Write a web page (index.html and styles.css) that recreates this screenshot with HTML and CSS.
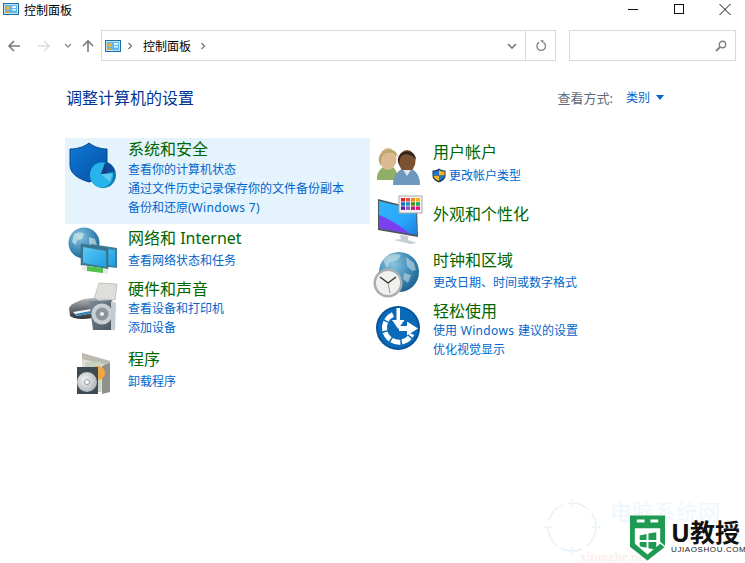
FILE: index.html
```html
<!DOCTYPE html>
<html lang="zh-CN">
<head>
<meta charset="utf-8">
<title>控制面板</title>
<link rel="stylesheet" href="styles.css">
</head>
<body>
<svg class="defs" width="0" height="0">
  <defs>
    <symbol id="cp" viewBox="0 0 16 12">
      <rect x=".5" y=".5" width="15" height="11" fill="#bfe3f7" stroke="#1d6fa5"/>
      <rect x="2" y="2" width="12" height="8" fill="#5db7e8"/>
      <circle cx="5" cy="5" r="2" fill="#f5b335"/>
      <rect x="9" y="3" width="4" height="2" fill="#e6f4fc"/>
      <rect x="9" y="6" width="4" height="1.5" fill="#e6f4fc"/>
      <rect x="2" y="8.4" width="5" height="1.6" fill="#f0a020"/>
    </symbol>
    <radialGradient id="globe" cx=".35" cy=".3" r=".8">
      <stop offset="0" stop-color="#8cc6e0"/><stop offset=".55" stop-color="#3f8cb8"/><stop offset="1" stop-color="#1b5a86"/>
    </radialGradient>
    <linearGradient id="shieldG" x1="0" y1="0" x2="1" y2="1">
      <stop offset="0" stop-color="#0f79d8"/><stop offset="1" stop-color="#0650a0"/>
    </linearGradient>
    <linearGradient id="screenG" x1="0" y1="0" x2="1" y2="1">
      <stop offset="0" stop-color="#5cc8f5"/><stop offset="1" stop-color="#1d9fe0"/>
    </linearGradient>
    <linearGradient id="desk" x1="0" y1="0" x2="1" y2="1">
      <stop offset="0" stop-color="#2fb4fb"/><stop offset=".6" stop-color="#2aa5fa"/><stop offset="1" stop-color="#1a80e0"/>
    </linearGradient>
    <linearGradient id="metal" x1="0" y1="0" x2="1" y2="1">
      <stop offset="0" stop-color="#7d8c9a"/><stop offset="1" stop-color="#46535f"/>
    </linearGradient>
    <linearGradient id="printerG" x1="0" y1="0" x2="0" y2="1">
      <stop offset="0" stop-color="#b4b9bc"/><stop offset=".5" stop-color="#6a7074"/><stop offset="1" stop-color="#2e3236"/>
    </linearGradient>
    <radialGradient id="cd" cx=".4" cy=".4" r=".7">
      <stop offset="0" stop-color="#f2f2f2"/><stop offset="1" stop-color="#a9b0b4"/>
    </radialGradient>
  </defs>
</svg>

<div class="window">
  <header class="titlebar">
    <svg class="title-icon"><use href="#cp"/></svg>
    <span class="title-text">控制面板</span>
    <div class="win-buttons">
      <svg class="win-btn" viewBox="0 0 12 12"><path d="M1 6.5h10" stroke="#111" fill="none"/></svg>
      <svg class="win-btn" viewBox="0 0 12 12"><rect x="1.5" y="1.5" width="9" height="9" stroke="#111" fill="none"/></svg>
      <svg class="win-btn" viewBox="0 0 12 12"><path d="M.5 1l11 11M11.5 1l-11 11" stroke="#111" fill="none"/></svg>
    </div>
  </header>

  <nav class="toolbar">
    <div class="nav-buttons">
      <svg class="nav-ic" viewBox="0 0 14 14"><path d="M13 7H2M7 2 2 7l5 5" stroke="#7a7a7a" stroke-width="1.6" fill="none"/></svg>
      <svg class="nav-ic nav-gap" viewBox="0 0 14 14"><path d="M1 7h11M7 2l5 5-5 5" stroke="#dcdcdc" stroke-width="1.6" fill="none"/></svg>
      <svg class="nav-mini" viewBox="0 0 8 6"><path d="m1 1 3 3 3-3" stroke="#8a8a8a" stroke-width="1.3" fill="none"/></svg>
      <svg class="nav-ic nav-up" viewBox="0 0 14 14"><path d="M7 13V2M2 7l5-5 5 5" stroke="#7a7a7a" stroke-width="1.6" fill="none"/></svg>
    </div>
    <div class="address">
      <svg class="addr-icon"><use href="#cp"/></svg>
      <svg class="crumb" viewBox="0 0 6 8"><path d="m1.500 1 3 3-3 3" stroke="#777" stroke-width="1.300" fill="none"/></svg>
      <span class="addr-text">控制面板</span>
      <svg class="crumb" viewBox="0 0 6 8"><path d="m1.500 1 3 3-3 3" stroke="#777" stroke-width="1.300" fill="none"/></svg>
      <svg class="addr-drop" viewBox="0 0 10 6"><path d="m1 1 4 4 4-4" stroke="#777" stroke-width="1.600" fill="none"/></svg>
      <div class="addr-refresh">
        <svg class="refresh-ic" viewBox="0 0 12 12"><path d="M8.800 2.700A4.300 4.300 0 1 1 4.200 2.300" stroke="#808080" stroke-width="1.300" fill="none"/><path d="M5 .2 8.500 .2 8.500 3.500Z" fill="#808080"/></svg>
      </div>
    </div>
    <div class="search">
      <svg class="search-ic" viewBox="0 0 12 12"><circle cx="7.500" cy="4.500" r="3.200" stroke="#808080" stroke-width="1.400" fill="none"/><path d="M5 7 1 11" stroke="#808080" stroke-width="1.800"/></svg>
    </div>
  </nav>

  <main class="content">
    <div class="content-head">
      <h1 class="heading">调整计算机的设置</h1>
      <div class="view-by">
        <span class="view-label">查看方式:</span>
        <span class="view-value">类别</span>
        <span class="view-caret"></span>
      </div>
    </div>

    <div class="columns">
      <div class="col col-left">
        <section class="cat cat-active">
          <svg class="cat-icon" viewBox="0 0 63 50">
            <path d="M5 11C12 11 19 9 24 5 29 9 36 11 42 11V27C42 36 33 41 24 44 14 41 5 36 5 27Z" fill="url(#shieldG)" stroke="#04488f"/>
            <ellipse cx="38" cy="37" rx="13" ry="13" fill="#0f7fb5"/>
            <ellipse cx="36.500" cy="37" rx="11.500" ry="12.500" fill="#26b4ea"/>
            <path d="M41 24 36 36 50 34C49 29 46 25 41 24Z" fill="#0b4f9a"/>
            <path d="M36 36 40 25 43 35Z" fill="#1a3f88"/>
            <path d="M36 36 47 36 45 44Z" fill="#5fc8ef"/>
          </svg>
          <div class="cat-body">
            <h2 class="cat-title">系统和安全</h2>
            <a class="cat-link">查看你的计算机状态</a>
            <a class="cat-link">通过文件历史记录保存你的文件备份副本</a>
            <a class="cat-link">备份和还原(<span class="latin">Windows 7</span>)</a>
          </div>
        </section>

        <section class="cat">
          <svg class="cat-icon" viewBox="0 0 63 50">
            <circle cx="19" cy="16" r="15.500" fill="url(#globe)"/>
            <path d="M9 7c4-2 8-2 10 0l-2 5-5 1-1 5-4-3zM24 10l6 2 2 6-5 3-3-5z" fill="#dff0e6" opacity=".6"/>
            <path d="M26 17 52 21V41L26 38Z" fill="#3d7d9e"/>
            <path d="M28 20 50 23V39L28 36Z" fill="url(#screenG)"/>
            <path d="M16 17 43 22V42L16 38Z" fill="#39788f" stroke="#2c6480" stroke-width=".5"/>
            <path d="M18 20 41 24V40L18 36Z" fill="url(#screenG)"/>
            <path d="M17 38 43 42 43 47 17 43Z" fill="#e6eae8"/>
            <path d="M22 39 38 41 38 46 22 44Z" fill="#52c24a"/>
          </svg>
          <div class="cat-body">
            <h2 class="cat-title">网络和 Internet</h2>
            <a class="cat-link cat-link-single">查看网络状态和任务</a>
          </div>
        </section>

        <section class="cat">
          <svg class="cat-icon" viewBox="0 0 63 50">
            <path d="M34 5 52 6 50 22 29 21Z" fill="#dededa" stroke="#a8a8a4" stroke-width=".6"/>
            <path d="M4 30C6 25 18 20 30 20L36 24V38C22 42 10 42 5 38Z" fill="url(#printerG)"/>
            <path d="M8 34 26 31 28 35 12 38Z" fill="#f4f4f4"/>
            <path d="M10 36 26 33 27 35 13 38Z" fill="#2f7fb8"/>
            <path d="M24 23 47 22 50 52 28 52Z" fill="url(#metal)"/>
            <circle cx="37" cy="36" r="10.500" fill="#c9cfd2"/>
            <circle cx="37" cy="36" r="6.500" fill="#8c979d"/>
            <circle cx="37" cy="36" r="2" fill="#eef0f1"/>
            <path d="M46 23 51 25 50 52 46 52Z" fill="#c4cbd0"/>
          </svg>
          <div class="cat-body">
            <h2 class="cat-title">硬件和声音</h2>
            <a class="cat-link">查看设备和打印机</a>
            <a class="cat-link">添加设备</a>
          </div>
        </section>

        <section class="cat">
          <svg class="cat-icon" viewBox="0 0 63 50">
            <path d="M17 5 45 13V44L17 44Z" fill="#e2e0da"/>
            <path d="M17 5 45 13 45 18 17 11Z" fill="#bdbab2"/>
            <path d="M37 18 45 15V44L37 46Z" fill="#8f8f8b"/>
            <rect x="20" y="14" width="16" height="30" fill="#c6d5c0"/>
            <circle cx="33" cy="25" r="7" fill="#f0a643"/>
            <rect x="12" y="19" width="21" height="27" fill="#3d4a52"/>
            <circle cx="22" cy="34" r="10" fill="url(#cd)"/>
            <circle cx="22" cy="34" r="2.500" fill="#fff" stroke="#8f979b"/>
          </svg>
          <div class="cat-body">
            <h2 class="cat-title">程序</h2>
            <a class="cat-link cat-link-single">卸载程序</a>
          </div>
        </section>
      </div>

      <div class="col col-right">
        <section class="cat">
          <svg class="cat-icon" viewBox="0 0 63 50">
            <path d="M7 39C6 31 12 25 18 25 24 25 28 30 28 39Z" fill="#8fae66"/>
            <ellipse cx="18" cy="18" rx="8.500" ry="11" fill="#dcb893"/>
            <path d="M9 21C6 8 26 3 28 16 25 12 20 11 17 12 13 12 11 16 11 25Z" fill="#bda86e"/>
            <path d="M23 44C23 33 30 27 37 27 44 27 50 33 50 44Z" fill="#6d97bd"/>
            <ellipse cx="37" cy="20" rx="8.500" ry="11" fill="#7c5233"/>
            <path d="M28 21C26 8 46 6 46 19 43 14 36 12 33 14 30 15 30 18 29 24Z" fill="#33261c"/>
            <path d="M33 29 37 35 41 29Z" fill="#dfe7ee"/>
          </svg>
          <div class="cat-body">
            <h2 class="cat-title">用户帐户</h2>
            <a class="cat-link cat-link-single cat-link-uac">
              <svg class="uac" viewBox="0 0 14 15">
                <path d="M7 .5C9 2 11 2.500 13.500 2.500V8C13.500 11 10 13.500 7 14.500 4 13.500 .5 11 .5 8V2.500C3 2.500 5 2 7 .5Z" fill="#17365e"/>
                <path d="M7 2V7.500H12.500V3.500C10.500 3.500 8.500 3 7 2Z" fill="#f5b61f"/>
                <path d="M7 7.500V13C4.500 12 1.500 10 1.500 7.500Z" fill="#f5b61f"/>
                <path d="M7 2V7.500H1.500V3.500C3.500 3.500 5.500 3 7 2Z" fill="#1f78c8"/>
                <path d="M7 7.500V13C9.500 12 12.500 10 12.500 7.500Z" fill="#1f78c8"/>
              </svg>更改帐户类型</a>
          </div>
        </section>

        <section class="cat">
          <svg class="cat-icon" viewBox="0 0 63 50">
            <path d="M8 -4 47 6 48 34 8 27Z" fill="#4e565c"/>
            <path d="M9 -2 46 7 47 32 9 25Z" fill="url(#desk)"/>
            <path d="M9 12C20 16 32 24 40 31L9 25Z" fill="#7a3ff0"/>
            <path d="M30 32 38 33 38 37 47 40 40 41 24 37 31 36Z" fill="#c7ced2"/>
            <rect x="29" y="-7" width="23" height="17" fill="#f4f4f4" stroke="#a9a9a9"/>
            <rect x="31" y="-5" width="4" height="3.500" fill="#e8202c"/>
            <rect x="36" y="-5" width="4" height="3.500" fill="#f05040"/>
            <rect x="41" y="-5" width="4" height="3.500" fill="#f08a1c"/>
            <rect x="46" y="-5" width="4" height="3.500" fill="#f5b60c"/>
            <rect x="31" y="-.8" width="4" height="3.500" fill="#1b6fc0"/>
            <rect x="36" y="-.8" width="4" height="3.500" fill="#1890c8"/>
            <rect x="41" y="-.8" width="4" height="3.500" fill="#5a8a14"/>
            <rect x="46" y="-.8" width="4" height="3.500" fill="#10b060"/>
            <rect x="31" y="3.400" width="4" height="3.500" fill="#5a1db0"/>
            <rect x="36" y="3.400" width="4" height="3.500" fill="#8a5cc0"/>
            <rect x="41" y="3.400" width="4" height="3.500" fill="#c01878"/>
            <rect x="46" y="3.400" width="4" height="3.500" fill="#f01070"/>
          </svg>
          <div class="cat-body">
            <h2 class="cat-title">外观和个性化</h2>
          </div>
        </section>

        <section class="cat">
          <svg class="cat-icon" viewBox="0 0 63 50">
            <circle cx="29" cy="23" r="20" fill="url(#globe)"/>
            <path d="M13 11c5-6 13-7 18-5l-3 5-8 2-3 6zM36 8l8 6 2 7-4 1-5-5zM34 24l7 2-3 8-5-4z" fill="#dfeef0" opacity=".5"/>
            <circle cx="18" cy="34" r="14.500" fill="#a8aeb2"/>
            <circle cx="18" cy="34" r="12" fill="#f0f0ee"/>
            <path d="M18 34 10 28M18 34 26 28" stroke="#333" stroke-width="1.400" fill="none"/>
            <path d="M18 34 20 44" stroke="#999" stroke-width="1"/>
          </svg>
          <div class="cat-body">
            <h2 class="cat-title">时钟和区域</h2>
            <a class="cat-link cat-link-single">更改日期、时间或数字格式</a>
          </div>
        </section>

        <section class="cat">
          <svg class="cat-icon" viewBox="0 0 63 50">
            <circle cx="28" cy="28" r="22" fill="#05549c"/>
            <circle cx="28" cy="28" r="20" fill="#0a6ab8"/>
            <path d="M23 14.500A14.500 14.500 0 1 0 42 34" fill="none" stroke="#fff" stroke-width="5" stroke-dasharray="9 1.500"/>
            <rect x="26.500" y="8" width="3.500" height="16" fill="#fff"/>
            <path d="M22 20 28.200 29 34.500 20Z" fill="#fff"/>
            <path d="M29 26H37V21.500L48 28.500 37 35.500V31H29Z" fill="#fff"/>
          </svg>
          <div class="cat-body">
            <h2 class="cat-title">轻松使用</h2>
            <a class="cat-link cat-link-wide">使用 <span class="latin">Windows</span> 建议的设置</a>
            <a class="cat-link">优化视觉显示</a>
          </div>
        </section>
      </div>
    </div>
  </main>

  <aside class="brand">
    <svg class="brand-ring" viewBox="0 0 62 58">
      <circle cx="31" cy="29" r="24" fill="none" stroke="#e6f3fa" stroke-width="1.500" stroke-dasharray="22 5"/>
      <path d="M31 1v8M31 49v8M3 29h8M51 29h8" stroke="#edf6fb" stroke-width="2"/>
    </svg>
    <span class="brand-ghost">电脑系统网</span>
    <span class="brand-ghost-url">xitonghe.net</span>
    <svg class="brand-shield" viewBox="0 0 38 48">
      <path d="M1 1H37V33L19 47 1 33Z" fill="#1e9a52"/>
      <rect x="8" y="5" width="8" height="3" fill="#fff"/>
      <rect x="22" y="5" width="8" height="3" fill="#fff"/>
      <path d="M6 14H32V30L19 41 6 30Z" fill="#fff"/>
      <path d="M11 21.500 18 20V26H11ZM20 19.500 28 18V26H20ZM11 28H18V34L11 32.500ZM20 28H28V36L20 34.500Z" fill="#1e9a52"/>
      <path d="M31 28 37 33" stroke="#fff" stroke-width="1.500"/>
    </svg>
    <div class="brand-text">
      <div class="brand-name">U教授</div>
      <div class="brand-url">UJIAOSHOU.COM</div>
    </div>
  </aside>
</div>
</body>
</html>
```

FILE: styles.css
```css
* { box-sizing: border-box; }
html, body { margin: 0; padding: 0; background: #fff; }
body {
  font-family: "Noto Sans", "Noto Sans CJK SC", sans-serif;
  font-size: 12px;
  overflow: hidden;
}
.defs { position: absolute; }
.window {
  position: relative;
  width: 745px;
  height: 563px;
  overflow: hidden;
  background: #fff;
}

/* title bar */
.titlebar {
  display: flex;
  align-items: center;
  height: 18px;
  padding-left: 3px;
}
.title-icon { width: 16px; height: 12px; flex: none; }
.title-text {
  margin-left: 5px;
  padding-top: 3px;
  font-size: 12px;
  line-height: 18px;
  color: #000;
}
.win-buttons {
  margin-left: auto;
  display: flex;
  gap: 34px;
  padding-right: 14px;
}
.win-btn { width: 12px; height: 12px; display: block; }

/* toolbar */
.toolbar {
  display: flex;
  align-items: center;
  height: 31px;
  margin-top: 12px;
  padding-left: 7px;
}
.nav-buttons { display: flex; align-items: center; width: 94px; flex: none; }
.nav-ic { width: 14px; height: 14px; display: block; flex: none; }
.nav-gap { margin-left: 16px; }
.nav-mini { width: 8px; height: 6px; margin-left: 13px; display: block; flex: none; }
.nav-up { margin-left: 9px; }
.address {
  display: flex;
  align-items: center;
  width: 455px;
  height: 31px;
  border: 1px solid #d9d9d9;
  padding-left: 3px;
  flex: none;
}
.addr-icon { width: 16px; height: 12px; flex: none; }
.crumb { width: 6px; height: 8px; margin-left: 6px; flex: none; }
.addr-text { margin-left: 10px; margin-right: 3px; font-size: 12px; color: #000; }
.addr-drop { width: 10px; height: 6px; margin-left: auto; margin-right: 8px; flex: none; }
.addr-refresh {
  width: 30px;
  height: 29px;
  border-left: 1px solid #d9d9d9;
  display: flex;
  align-items: center;
  justify-content: center;
  flex: none;
}
.refresh-ic { width: 12px; height: 12px; }
.search {
  display: flex;
  align-items: center;
  justify-content: flex-end;
  width: 167px;
  height: 31px;
  margin-left: 13px;
  border: 1px solid #d9d9d9;
  padding-right: 8px;
  flex: none;
}
.search-ic { width: 12px; height: 12px; }

/* content */
.content { padding-left: 65px; }
.content-head {
  display: flex;
  align-items: center;
  height: 26px;
  margin-top: 24px;
}
.heading {
  margin: 0 0 0 1px;
  font-size: 16px;
  font-weight: 400;
  line-height: 26px;
  color: #003399;
}
.view-by {
  margin-left: auto;
  margin-right: 81px;
  display: flex;
  align-items: center;
  padding-bottom: 2px;
}
.view-label { font-size: 13px; color: #5f6b78; }
.view-value { margin-left: 13px; font-size: 12px; color: #0066cc; }
.view-caret {
  margin-left: 6px;
  width: 0;
  height: 0;
  border-left: 4px solid transparent;
  border-right: 4px solid transparent;
  border-top: 5px solid #0066cc;
}
.columns {
  display: grid;
  grid-template-columns: 305px 1fr;
  margin-top: 27px;
}
.col { display: grid; align-content: start; }
.col-left { grid-template-rows: 89px 51px 70px auto; }
.col-right { padding-top: 3px; grid-template-rows: 62px 46px 51px auto; }

.cat {
  display: grid;
  grid-template-columns: 63px 1fr;
  align-self: start;
  padding-top: 1px;
}
.cat-active { background: #e5f3fd; height: 86px; }
.cat-active .cat-title { margin-bottom: 1px; }
.cat-icon {
  display: block;
  width: 63px;
  height: 50px;
  margin-top: -1px;
  overflow: visible;
}
.cat-body { display: flex; flex-direction: column; align-items: flex-start; }
.cat-title {
  margin: 0;
  font-size: 16px;
  font-weight: 400;
  line-height: 20px;
  color: #006600;
  white-space: nowrap;
}
.cat-link {
  font-size: 12px;
  line-height: 19px;
  color: #0066cc;
  white-space: nowrap;
}
.cat-link-single { margin-top: 3px; }
.cat-link-wide { word-spacing: .5px; }
.latin { letter-spacing: .35px; }
.cat-link-uac {
  display: flex;
  align-items: center;
  margin-left: -1px;
  margin-top: 4px;
}
.uac { width: 14px; height: 15px; margin-right: 3px; flex: none; }

/* corner watermark */
.brand {
  position: absolute;
  right: 0;
  bottom: 0;
  width: 205px;
  height: 65px;
}
.brand-ring { position: absolute; left: 1px; top: 0; width: 62px; height: 58px; }
.brand-ghost {
  position: absolute;
  left: 70px;
  top: 7px;
  font-size: 22px;
  line-height: 12px;
  color: #eef7fc;
  white-space: nowrap;
}
.brand-ghost-url {
  position: absolute;
  left: 40px;
  top: 53px;
  font-family: "Liberation Serif", serif;
  font-size: 13px;
  line-height: 12px;
  font-weight: 700;
  color: #fdeeee;
  white-space: nowrap;
}
.brand-shield { position: absolute; left: 89px; top: 16px; width: 37px; height: 48px; }
.brand-text { position: absolute; left: 131px; top: 24px; }
.brand-name {
  font-size: 25px;
  font-weight: 700;
  line-height: 20px;
  color: #111;
  white-space: nowrap;
}
.brand-url {
  margin-top: 4px;
  font-family: "Liberation Sans", sans-serif;
  font-size: 8px;
  line-height: 8px;
  letter-spacing: .6px;
  color: #222;
  white-space: nowrap;
}
```
